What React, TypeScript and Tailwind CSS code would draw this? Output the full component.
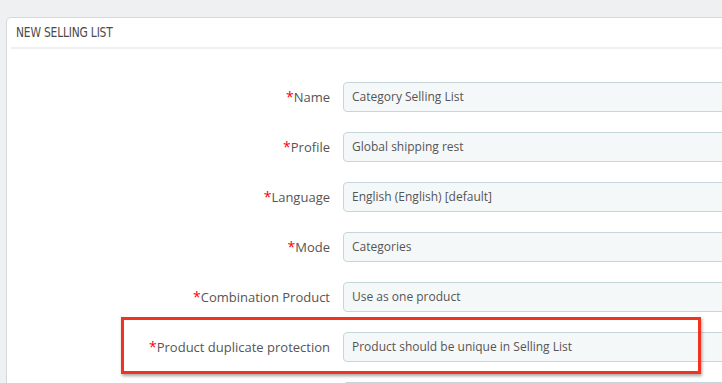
const fields = [
  { label: "Name", value: "Category Selling List" },
  { label: "Profile", value: "Global shipping rest" },
  { label: "Language", value: "English (English) [default]" },
  { label: "Mode", value: "Categories" },
  { label: "Combination Product", value: "Use as one product" },
  { label: "Product duplicate protection", value: "Product should be unique in Selling List" },
  { label: "", value: "" },
];

export default function App() {
  return (
    <div className="w-[722px] h-[383px] overflow-hidden bg-[#eef0f2] pt-[17px] pl-[6px]" style={{ fontFamily: "'Open Sans', sans-serif" }}>
      <div className="relative w-[760px] h-[420px] bg-white border border-[#d3d9dc] rounded-[5px] px-[4px]">
        {/* header */}
        <div className="h-[31px] flex items-center pl-[5px] border-b-2 border-[#eef0f2]">
          <span className="inline-block origin-left scale-x-[0.88] text-[13.5px] text-[#4a4a4a] tracking-[-0.2px]" style={{ fontFamily: "'DejaVu Sans Condensed', 'Liberation Sans Narrow', sans-serif" }}>
            NEW SELLING LIST
          </span>
        </div>
        {/* form rows */}
        <div className="flex flex-col gap-[20px] pt-[33px]">
          {fields.map((f, idx) => (
            <div key={idx} className="flex items-center h-[30px]">
              <label className="w-[320px] shrink-0 text-right text-[13px] text-[#555] pr-[1px]">
                {f.label && <span className="text-[#f00] text-[14px]">*</span>}
                {f.label}
              </label>
              <div className="ml-[12px] flex-1 h-[30px] flex items-center pl-[8px] bg-[#f5f8f9] border border-[#c7d6db] rounded-[4px] text-[12px] text-[#555]">
                {f.value}
              </div>
            </div>
          ))}
        </div>
        {/* highlight box */}
        <div className="absolute left-[114px] top-[299px] w-[580px] h-[57px] border-[3px] border-[#f2331d] shadow-[1px_2px_3px_rgba(0,0,0,0.35)]" />
      </div>
    </div>
  );
}
